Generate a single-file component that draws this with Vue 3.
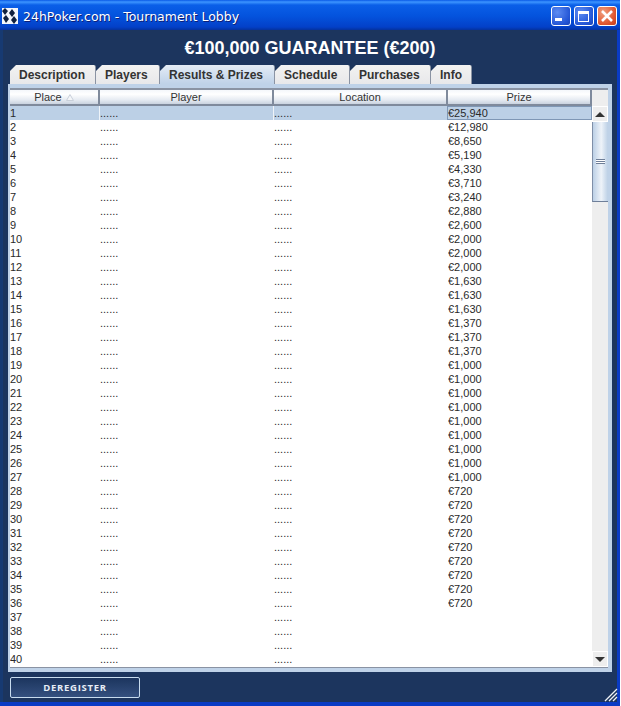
<template>
  <div class="window">
    <header class="titlebar">
      <svg class="app-icon" width="16" height="16" viewBox="0 0 16 16">
        <rect width="16" height="16" fill="#f4f6fb" />
        <path d="M0 3 3 0 6 3 3 7ZM7 5 10 1 13 5 10 9ZM1 10 4 7 7 11 4 15ZM9 12 12 8 15 12 12 16Z" fill="#10203f" />
      </svg>
      <span class="title-text">24hPoker.com - Tournament Lobby</span>
      <div class="win-buttons">
        <button class="win-btn" type="button" aria-label="Minimize">
          <svg width="20" height="20" viewBox="0 0 20 20"><rect x="4" y="12" width="7" height="3" fill="#fff" /></svg>
        </button>
        <button class="win-btn" type="button" aria-label="Maximize">
          <svg width="20" height="20" viewBox="0 0 20 20"><path d="M4 5h11v11H4ZM5 8v7h9V8Z" fill="#fff" fill-rule="evenodd" /></svg>
        </button>
        <button class="win-btn close" type="button" aria-label="Close">
          <svg width="20" height="20" viewBox="0 0 20 20"><path d="M5 5 15 15M15 5 5 15" stroke="#fff" stroke-width="2.6" /></svg>
        </button>
      </div>
    </header>

    <div class="body">
      <h1 class="heading">€100,000 GUARANTEE (€200)</h1>

      <nav class="tabs">
        <div
          v-for="tab in tabs"
          :key="tab"
          class="tab"
          :class="{ active: tab === 'Results & Prizes' }"
        >{{ tab }}</div>
      </nav>

      <section class="panel">
        <div class="table-wrap">
          <div class="table">
            <div class="head-row">
              <div class="head-cell">
                Place
                <svg class="sort" width="8" height="7" viewBox="0 0 8 7"><path d="M4 .5 7.5 6.5H.5Z" fill="#f4f6f9" stroke="#c9d0da" /></svg>
              </div>
              <div class="head-cell">Player</div>
              <div class="head-cell">Location</div>
              <div class="head-cell">Prize</div>
            </div>
            <div
              v-for="row in rows"
              :key="row.place"
              class="row"
              :class="{ selected: row.place === 1 }"
            >
              <div class="cell">{{ row.place }}</div>
              <div class="cell dots">......</div>
              <div class="cell dots">......</div>
              <div class="cell prize">{{ row.prize }}</div>
            </div>
          </div>

          <div class="scrollbar">
            <div class="scroll-corner"></div>
            <div class="scroll-btn"><span class="arrow up"></span></div>
            <div class="track">
              <div class="thumb"><span class="grip"></span></div>
            </div>
            <div class="scroll-btn"><span class="arrow down"></span></div>
          </div>
        </div>
      </section>

      <footer class="footer">
        <button class="deregister" type="button">DEREGISTER</button>
        <svg class="grip-corner" width="14" height="14" viewBox="0 0 14 14">
          <path d="M1 13 13 1M5 13 13 5M9 13 13 9" stroke="#eef2f8" stroke-width="1.3" />
        </svg>
      </footer>
    </div>
  </div>
</template>

<script setup>
const tabs = ['Description', 'Players', 'Results & Prizes', 'Schedule', 'Purchases', 'Info']

const prizes = [
  '€25,940', '€12,980', '€8,650', '€5,190', '€4,330', '€3,710', '€3,240', '€2,880', '€2,600',
  '€2,000', '€2,000', '€2,000', '€1,630', '€1,630', '€1,630', '€1,370', '€1,370', '€1,370',
  ...Array(9).fill('€1,000'),
  ...Array(9).fill('€720')
]

const rows = Array.from({ length: 40 }, (_, i) => ({
  place: i + 1,
  prize: prizes[i] || ''
}))
</script>

<style>
html,
body {
  background: #fff;
}
</style>

<style scoped>
.window {
  width: 620px;
  height: 706px;
  box-sizing: border-box;
  display: flex;
  flex-direction: column;
  font-family: "Liberation Sans", Arial, sans-serif;
  background: #0a3bc4;
  overflow: hidden;
}

.titlebar {
  height: 30px;
  flex: none;
  display: flex;
  align-items: center;
  gap: 5px;
  padding: 2px 3px 0 2px;
  box-sizing: border-box;
  background: linear-gradient(#0a5ae6 0, #3d95ff 2px, #0a5fe8 5px, #0453dd 16px, #0340c8 27px, #04329f 30px);
}

.app-icon {
  flex: none;
}

.title-text {
  flex: 1;
  font-family: "DejaVu Sans", sans-serif;
  font-size: 12.5px;
  font-weight: 400;
  color: #fff;
  text-shadow: 1px 1px #0f1f77;
}

.win-buttons {
  display: flex;
  gap: 3px;
}

.win-btn {
  width: 20px;
  height: 20px;
  padding: 0;
  display: block;
  box-sizing: border-box;
  border: 1px solid #fff;
  border-radius: 3px;
  background: radial-gradient(circle at 30% 30%, #5d8cf2, #2456d6 70%, #1b44b8);
}

.win-btn svg {
  display: block;
  margin: -1px;
}

.win-btn.close {
  background: radial-gradient(circle at 30% 30%, #f0a080, #e0562f 65%, #c33b1b);
}

.body {
  flex: 1;
  min-height: 0;
  margin: 0 3px 4px 0;
  border-left: 3px solid #173a72;
  padding: 0 5px;
  display: flex;
  flex-direction: column;
  background: #1c355e;
}

.heading {
  margin: 0;
  height: 35px;
  line-height: 37px;
  flex: none;
  text-align: center;
  font-size: 18px;
  font-weight: 700;
  color: #fff;
}

.tabs {
  display: grid;
  grid-template-columns: 86px 64px 115px 75px 81px 41px;
  height: 19px;
  flex: none;
  padding-left: 2px;
}

.tab {
  height: 19px;
  box-sizing: border-box;
  padding-left: 9px;
  line-height: 20px;
  font-size: 12px;
  font-weight: 700;
  color: #333;
  white-space: nowrap;
  background: linear-gradient(#f2f2f2, #e8e8ea);
  border-right: 1px solid #8a93a3;
  border-radius: 0 2px 0 0;
  clip-path: polygon(0 6px, 6px 0, 100% 0, 100% 100%, 0 100%);
}

.tab.active {
  background: linear-gradient(#e4ecf6, #bfd2e8);
}

.panel {
  flex: 1;
  min-height: 0;
  box-sizing: border-box;
  padding: 4px 4px 4px 2px;
  background: #bfd2e8;
}

.table-wrap {
  height: 100%;
  box-sizing: border-box;
  display: flex;
  background: #fff;
  border-top: 2px solid #8a93a3;
  border-bottom: 1px solid #8a93a3;
  overflow: hidden;
}

.table {
  flex: 1;
  min-width: 0;
  overflow: hidden;
}

.head-row,
.row {
  display: grid;
  grid-template-columns: 90px 174px 174px 144px;
}

.head-row {
  height: 16px;
}

.head-cell {
  box-sizing: border-box;
  height: 16px;
  line-height: 15px;
  text-align: center;
  font-size: 11px;
  color: #333;
  background: linear-gradient(#f4f7fb, #ffffff 30%, #e6ebf2 70%, #c9d2df);
  border-right: 2px solid #7f8a9c;
  border-bottom: 2px solid #7f8a9c;
}

.sort {
  margin-left: 1px;
}

.row {
  height: 14px;
}

.row.selected {
  background: #bcd0e6;
}

.cell {
  font-size: 11px;
  line-height: 14px;
  color: #2a2a2a;
  white-space: nowrap;
  overflow: hidden;
}

.row.selected .dots {
  box-shadow: -1px 0 #eef3f9;
}

.row.selected .prize {
  box-sizing: border-box;
  margin-left: -1px;
  border: 1px solid #7f97b5;
  line-height: 12px;
}

.scrollbar {
  width: 16px;
  flex: none;
  display: flex;
  flex-direction: column;
  background: #eeeeee;
}

.scroll-corner {
  height: 16px;
  flex: none;
}

.scroll-btn {
  height: 16px;
  flex: none;
  box-sizing: border-box;
  display: flex;
  align-items: center;
  justify-content: center;
  background: #eeeeee;
  border: 1px solid #fff;
}

.arrow {
  width: 0;
  height: 0;
  border-left: 5px solid transparent;
  border-right: 5px solid transparent;
}

.arrow.up {
  border-bottom: 5px solid #333;
}

.arrow.down {
  border-top: 5px solid #333;
}

.track {
  flex: 1;
  min-height: 0;
}

.thumb {
  height: 80px;
  box-sizing: border-box;
  display: flex;
  align-items: center;
  justify-content: center;
  background: linear-gradient(90deg, #bcd0e6, #eef3f9 55%, #bcd0e6);
  border-left: 1px solid #7f8fa8;
  border-bottom: 1px solid #6f7f99;
}

.grip {
  width: 9px;
  height: 5px;
  box-sizing: border-box;
  border-top: 1px solid #6f7f99;
  border-bottom: 1px solid #6f7f99;
  background: linear-gradient(#fff 0 1px, #6f7f99 1px 2px, #fff 2px);
}

.footer {
  height: 30px;
  flex: none;
  position: relative;
  display: flex;
  align-items: center;
  padding-left: 2px;
}

.deregister {
  width: 130px;
  height: 21px;
  padding: 0;
  border: 1px solid #c8dcee;
  border-radius: 2px;
  background: linear-gradient(#1c355e, #34507f);
  color: #e6edf5;
  font-family: "Open Sans", "Liberation Sans", sans-serif;
  font-size: 9.5px;
  font-weight: 700;
  letter-spacing: 0.7px;
}

.grip-corner {
  position: absolute;
  right: -6px;
  bottom: 0;
}
</style>
